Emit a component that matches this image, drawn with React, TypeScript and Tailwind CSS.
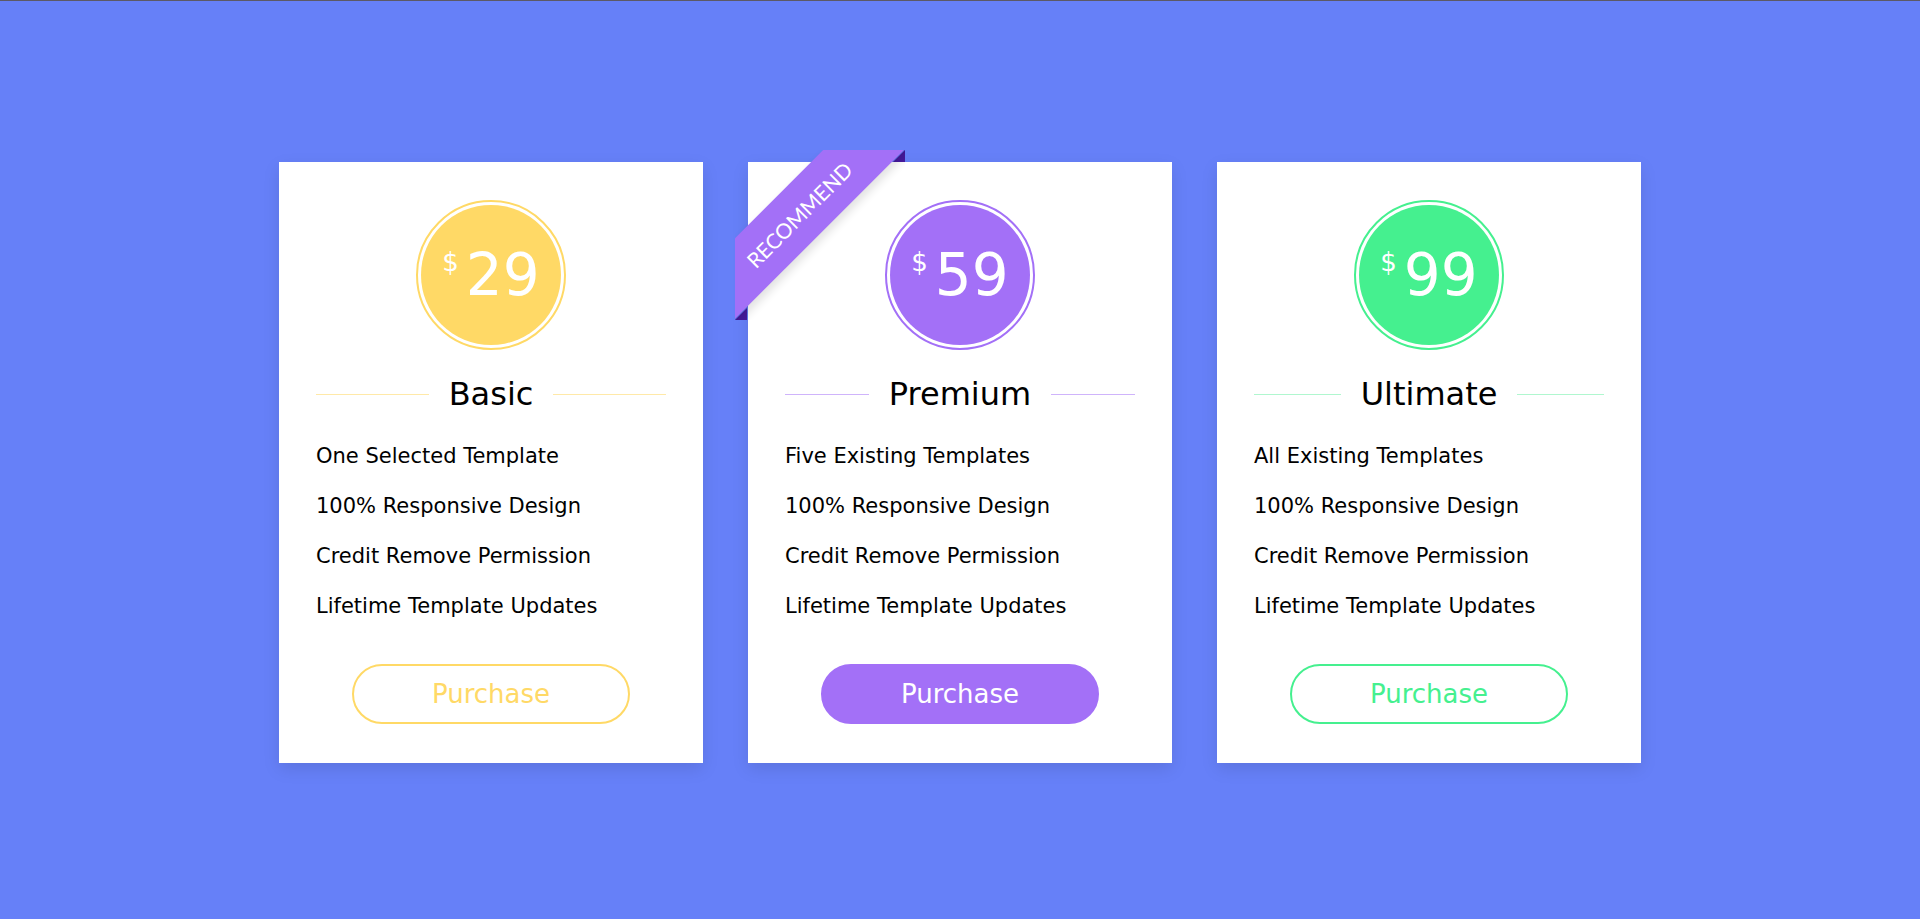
import React from "react";

type Plan = {
  price: string;
  name: string;
  features: string[];
  ring: string;
  fill: string;
  line: string;
  button: string;
  recommend?: boolean;
};

const plans: Plan[] = [
  {
    price: "29",
    name: "Basic",
    features: [
      "One Selected Template",
      "100% Responsive Design",
      "Credit Remove Permission",
      "Lifetime Template Updates",
    ],
    ring: "border-[#ffd966]",
    fill: "bg-[#ffd966]",
    line: "bg-[#ffe9a8]",
    button: "border-2 border-[#ffd966] text-[#ffd966] bg-white",
  },
  {
    price: "59",
    name: "Premium",
    features: [
      "Five Existing Templates",
      "100% Responsive Design",
      "Credit Remove Permission",
      "Lifetime Template Updates",
    ],
    ring: "border-[#a370f7]",
    fill: "bg-[#a370f7]",
    line: "bg-[#cfb4fb]",
    button: "border-2 border-[#a370f7] bg-[#a370f7] text-white",
    recommend: true,
  },
  {
    price: "99",
    name: "Ultimate",
    features: [
      "All Existing Templates",
      "100% Responsive Design",
      "Credit Remove Permission",
      "Lifetime Template Updates",
    ],
    ring: "border-[#45f08f]",
    fill: "bg-[#45f08f]",
    line: "bg-[#b0f7cf]",
    button: "border-2 border-[#45f08f] text-[#45f08f] bg-white",
  },
];

const Ribbon = () => (
  <div className="absolute -top-[12px] -left-[13px] w-[170px] h-[170px] overflow-hidden z-10">
    <div className="absolute top-0 right-0 border-[6px] border-[#47199f] border-t-transparent border-l-transparent" />
    <div className="absolute bottom-0 left-0 border-[6px] border-[#47199f] border-t-transparent border-l-transparent" />
    <span className="absolute left-[-66px] top-[36px] w-[260px] h-[57px] -rotate-45 bg-[#a370f7] text-white flex items-center justify-center shadow-[0_5px_10px_rgba(0,0,0,0.12)] font-['Lato',sans-serif] text-[21px] uppercase">
      Recommend
    </span>
  </div>
);

const Card = ({ plan }: { plan: Plan }) => {
  return (
    <div className="relative w-[424px] bg-white shadow-[0_6px_16px_rgba(0,0,0,0.1)] px-[37px] pt-[38px] pb-[39px] flex flex-col items-center">
      {plan.recommend && <Ribbon />}
      <div className={`w-[150px] h-[150px] rounded-full border-2 p-[3px] ${plan.ring}`}>
        <div className={`w-full h-full rounded-full flex items-center justify-center text-white ${plan.fill}`}>
          <div className="flex items-start gap-[7px]">
            <span className="text-[26px] leading-none mt-[3px]">$</span>
            <span className="text-[58px] leading-none">{plan.price}</span>
          </div>
        </div>
      </div>
      <div className="w-full mt-[22px] flex items-center gap-5">
        <div className={`flex-1 h-px ${plan.line}`} />
        <h3 className="text-[32px] leading-[45px] text-black">{plan.name}</h3>
        <div className={`flex-1 h-px ${plan.line}`} />
      </div>
      <ul className="w-full mt-[15px]">
        {plan.features.map((f) => (
          <li key={f} className="h-[50px] flex items-center text-[21px] text-black">
            {f}
          </li>
        ))}
      </ul>
      <button
        className={`mt-[32px] w-[278px] h-[60px] rounded-full text-[26px] ${plan.button}`}
      >
        Purchase
      </button>
    </div>
  );
};

export default function App() {
  return (
    <div className="min-h-[919px] bg-[#6680f8] font-['DejaVu_Sans',sans-serif]">
      <div className="h-px bg-[#5c5966]" />
      <div className="flex justify-center gap-[45px] pt-[161px]">
        {plans.map((p) => (
          <Card key={p.name} plan={p} />
        ))}
      </div>
    </div>
  );
}
